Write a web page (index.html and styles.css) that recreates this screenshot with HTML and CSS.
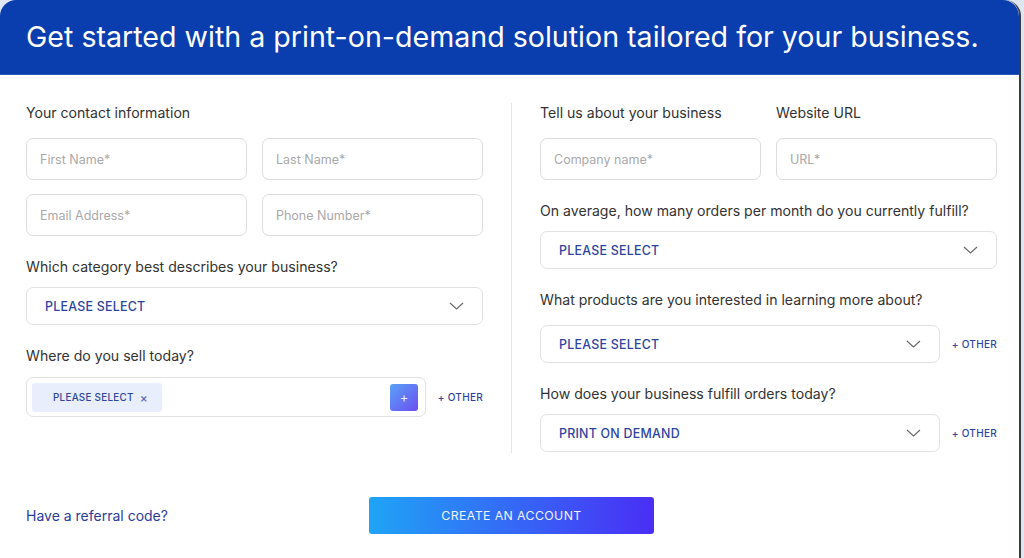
FILE: index.html
```html
<!DOCTYPE html>
<html>
<head>
<meta charset="utf-8">
<link rel="stylesheet" href="styles.css">
</head>
<body>
<div class="card">
  <div class="header">Get started with a print-on-demand solution tailored for your business.</div>
  <div class="content">
    <div class="col">
      <div class="label">Your contact information</div>
      <div class="pair">
        <div class="input">First Name*</div>
        <div class="input">Last Name*</div>
      </div>
      <div class="pair second">
        <div class="input">Email Address*</div>
        <div class="input">Phone Number*</div>
      </div>
      <div class="label gap-top">Which category best describes your business?</div>
      <div class="select">
        <span>PLEASE SELECT</span>
        <svg class="chev" width="15" height="8" viewBox="0 0 15 8"><path d="M1 1 L7.5 7 L14 1" fill="none" stroke="#666" stroke-width="1.1"/></svg>
      </div>
      <div class="label gap-top">Where do you sell today?</div>
      <div class="with-other">
        <div class="multi">
          <div class="chip">PLEASE SELECT <span class="x">×</span></div>
          <div class="plus">+</div>
        </div>
        <div class="other">+ OTHER</div>
      </div>
    </div>
    <div class="divider"></div>
    <div class="col">
      <div class="pair labels">
        <div class="label">Tell us about your business</div>
        <div class="label">Website URL</div>
      </div>
      <div class="pair">
        <div class="input">Company name*</div>
        <div class="input">URL*</div>
      </div>
      <div class="label gap-top">On average, how many orders per month do you currently fulfill?</div>
      <div class="select">
        <span>PLEASE SELECT</span>
        <svg class="chev" width="15" height="8" viewBox="0 0 15 8"><path d="M1 1 L7.5 7 L14 1" fill="none" stroke="#666" stroke-width="1.1"/></svg>
      </div>
      <div class="label gap-top wide">What products are you interested in learning more about?</div>
      <div class="with-other">
        <div class="select grow">
          <span>PLEASE SELECT</span>
          <svg class="chev" width="15" height="8" viewBox="0 0 15 8"><path d="M1 1 L7.5 7 L14 1" fill="none" stroke="#666" stroke-width="1.1"/></svg>
        </div>
        <div class="other">+ OTHER</div>
      </div>
      <div class="label gap-top">How does your business fulfill orders today?</div>
      <div class="with-other">
        <div class="select grow">
          <span>PRINT ON DEMAND</span>
          <svg class="chev" width="15" height="8" viewBox="0 0 15 8"><path d="M1 1 L7.5 7 L14 1" fill="none" stroke="#666" stroke-width="1.1"/></svg>
        </div>
        <div class="other">+ OTHER</div>
      </div>
    </div>
  </div>
  <div class="footer">
    <a class="referral">Have a referral code?</a>
    <div class="cta">CREATE AN ACCOUNT</div>
  </div>
</div>
</body>
</html>
```

FILE: styles.css
```css
html, body {
  margin: 0;
  padding: 0;
}
body {
  background: #dfe6f3;
  font-family: Inter, "Noto Sans", sans-serif;
  width: 1024px;
  height: 558px;
  overflow: hidden;
}
.card {
  width: 1021px;
  height: 558px;
  background: #fff;
  border-radius: 16px 16px 0 0;
  border-right: 2px solid #3d3d3d;
  box-sizing: border-box;
}
.header {
  height: 75px;
  background: #0a3dae;
  border-radius: 16px 16px 0 0;
  border-bottom: 1px solid #2c56b8;
  color: #fff;
  font-size: 28.6px;
  display: flex;
  align-items: center;
  padding-left: 26px;
  padding-bottom: 1px;
  box-sizing: border-box;
}
.content {
  display: grid;
  grid-template-columns: 457px 57px 457px;
  padding: 28px 0 0 26px;
}
.divider {
  width: 1px;
  background: #e4e4e4;
  margin-left: 28px;
  height: 350px;
}
.label {
  font-size: 14.1px;
  line-height: 20px;
  color: #333;
  margin-bottom: 15px;
}
.gap-top {
  margin-top: 21px;
  margin-bottom: 10px;
}
.gap-top.wide {
  margin-bottom: 15px;
}
.pair {
  display: grid;
  grid-template-columns: 221px 221px;
  column-gap: 15px;
}
.pair.second {
  margin-top: 14px;
}
.input {
  height: 42px;
  border: 1px solid #dcdcdc;
  border-radius: 7px;
  box-sizing: border-box;
  display: flex;
  align-items: center;
  padding-left: 13px;
  font-size: 12.5px;
  color: #a9a9a9;
}
.select {
  height: 38px;
  border: 1px solid #e2e2e2;
  border-radius: 7px;
  box-sizing: border-box;
  display: flex;
  align-items: center;
  justify-content: space-between;
  padding: 0 18px 0 18px;
  font-size: 12.4px;
  letter-spacing: 0.25px;
  color: #2d44a0;
  font-weight: 500;
}
.chev {
  display: block;
}
.with-other {
  display: flex;
  align-items: center;
}
.grow {
  width: 400px;
}
.other {
  margin-left: auto;
  font-size: 10px;
  color: #2d44a0;
  font-weight: 500;
  letter-spacing: 0.3px;
}
.multi {
  width: 400px;
  height: 40px;
  border: 1px solid #e2e2e2;
  border-radius: 7px;
  box-sizing: border-box;
  display: flex;
  align-items: center;
  justify-content: space-between;
  padding: 0 7px 0 5px;
  margin-top: 1px;
}
.chip {
  width: 130px;
  height: 29px;
  background: #e8eefc;
  border-radius: 3px;
  box-sizing: border-box;
  padding-left: 21px;
  display: flex;
  align-items: center;
  font-size: 9.8px;
  font-weight: 500;
  color: #2d44a0;
  letter-spacing: 0.3px;
}
.x {
  margin-left: 6px;
  font-size: 12px;
  color: #5b6bb0;
}
.plus {
  width: 28px;
  height: 27px;
  border-radius: 3px;
  background: linear-gradient(135deg, #5aa2f8, #6c4ef0);
  color: #e8ecff;
  font-size: 13px;
  display: flex;
  align-items: center;
  justify-content: center;
}
.footer {
  display: grid;
  grid-template-columns: 343px 285px;
  align-items: center;
  padding: 44px 0 0 26px;
}
.referral {
  font-size: 14px;
  color: #2a3c98;
}
.cta {
  height: 37px;
  border-radius: 3px;
  background: linear-gradient(90deg, #1fa4f6, #4a2ef5);
  color: #f0f3ff;
  font-size: 12.3px;
  letter-spacing: 0.4px;
  display: flex;
  align-items: center;
  justify-content: center;
}
```
